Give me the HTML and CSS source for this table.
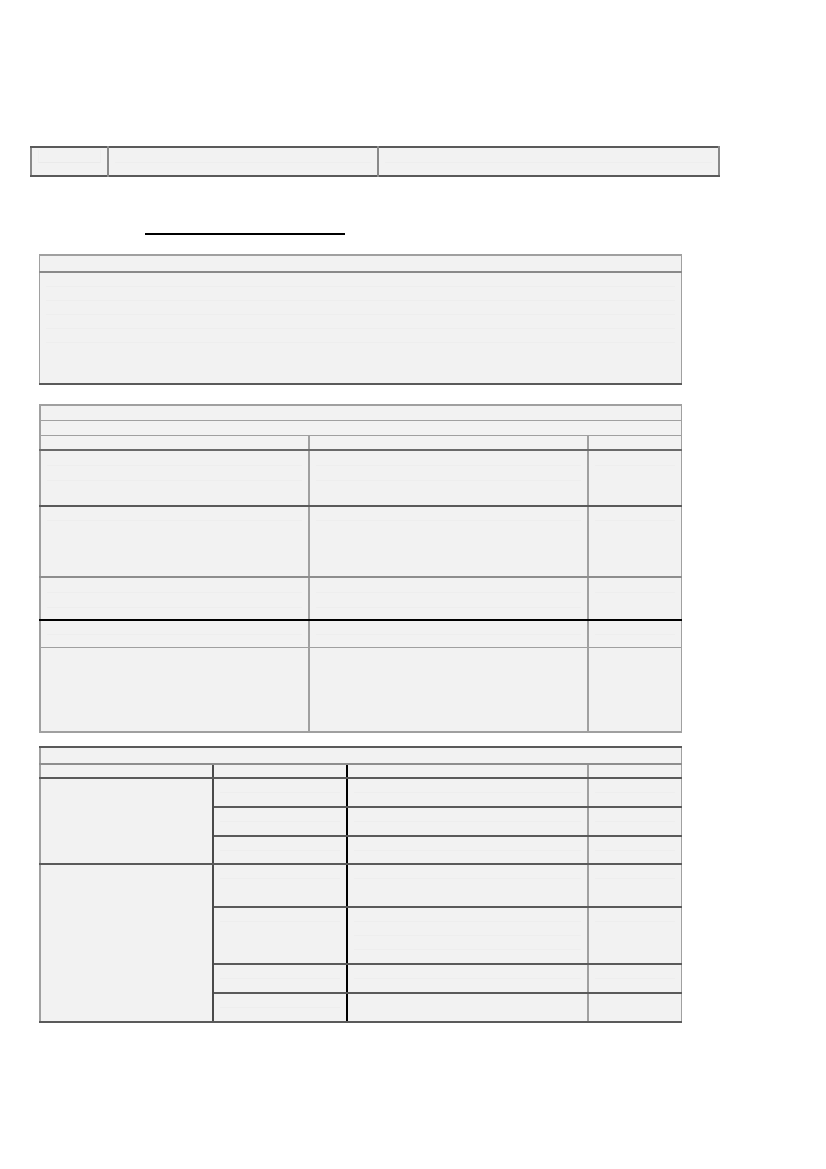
FILE: index.html
```html
<!DOCTYPE html>
<html>
<head>
<meta charset="utf-8">
<link rel="stylesheet" href="styles.css">
</head>
<body>
<div class="page">
  <table class="t top">
    <tr>
      <td class="c1"><div class="ln"></div></td>
      <td class="c2"><div class="ln"></div></td>
      <td class="c3"><div class="ln"></div></td>
    </tr>
  </table>

  <div class="heading"><span class="uline"></span></div>

  <table class="t box">
    <tr><td class="bh"></td></tr>
    <tr><td class="bb">
      <div class="ln"></div><div class="ln"></div><div class="ln"></div><div class="ln"></div><div class="ln"></div>
    </td></tr>
  </table>

  <table class="t t2">
    <colgroup><col class="w1"><col class="w2"><col class="w3"></colgroup>
    <tr class="h16"><td colspan="3"></td></tr>
    <tr class="h16"><td colspan="3"></td></tr>
    <tr class="h15 dk"><td class="lv"></td><td class="lv"></td><td></td></tr>
    <tr class="r56 dk"><td class="lv"><div class="ln"></div><div class="ln"></div></td><td class="lv"><div class="ln"></div><div class="ln"></div></td><td><div class="ln"></div></td></tr>
    <tr class="r71 gr"><td class="lv"><div class="ln"></div></td><td class="lv"><div class="ln"></div></td><td><div class="ln"></div></td></tr>
    <tr class="r43 bk"><td class="lv"><div class="ln"></div><div class="ln"></div></td><td class="lv"><div class="ln"></div><div class="ln"></div></td><td><div class="ln"></div></td></tr>
    <tr class="r28"><td class="lv"><div class="ln"></div></td><td class="lv"><div class="ln"></div></td><td><div class="ln"></div></td></tr>
    <tr class="r85"><td class="lv"></td><td class="lv"></td><td></td></tr>
  </table>

  <table class="t t3">
    <colgroup><col class="v1"><col class="v2"><col class="v3"><col class="v4"></colgroup>
    <tr class="h17 gr"><td colspan="4"></td></tr>
    <tr class="h14 dk"><td class="dv"></td><td class="bv"></td><td class="lv"></td><td></td></tr>
    <tr class="r29 dk"><td rowspan="3" class="dv"></td><td class="bv"><div class="ln"></div></td><td class="lv"><div class="ln"></div></td><td><div class="ln"></div></td></tr>
    <tr class="r29 dk"><td class="bv"><div class="ln"></div></td><td class="lv"><div class="ln"></div></td><td><div class="ln"></div></td></tr>
    <tr class="r28 dk"><td class="bv"><div class="ln"></div></td><td class="lv"><div class="ln"></div></td><td><div class="ln"></div></td></tr>
    <tr class="r43 dk"><td rowspan="4" class="dv"></td><td class="bv"><div class="ln"></div></td><td class="lv"><div class="ln"></div></td><td><div class="ln"></div></td></tr>
    <tr class="r57 dk"><td class="bv"><div class="ln"></div></td><td class="lv"><div class="ln"></div><div class="ln"></div><div class="ln"></div></td><td><div class="ln"></div></td></tr>
    <tr class="r29 dk"><td class="bv"><div class="ln"></div></td><td class="lv"><div class="ln"></div></td><td><div class="ln"></div></td></tr>
    <tr class="r28 dk"><td class="bv"><div class="ln"></div></td><td class="lv"></td><td></td></tr>
  </table>
</div>
</body>
</html>
```

FILE: styles.css
```css
html, body {
  margin: 0;
  padding: 0;
  background: #ffffff;
  font-family: "Liberation Sans", Arial, sans-serif;
}
.page {
  padding-top: 146px;
  padding-left: 30px;
}
.t {
  border-collapse: collapse;
  table-layout: fixed;
  background: #f2f2f2;
}
.t td {
  padding: 0;
  vertical-align: top;
  border: 1px solid #a0a0a0;
}
.ln {
  height: 13px;
  margin: 0 6px;
  border-bottom: 1px solid #eeeeee;
}

/* top table */
.top {
  width: 690px;
  border-top: 2px solid #5a5a5a;
  border-bottom: 2px solid #5a5a5a;
  border-left: 2px solid #8a8a8a;
  border-right: 2px solid #8a8a8a;
}
.top td { height: 27px; border-color: #8a8a8a; }
.top .c1 { width: 75px; border-right: 2px solid #8a8a8a; }
.top .c2 { width: 268px; border-right: 2px solid #8a8a8a; }
.top .c1 .ln { margin-top: 2px; height: 12px; margin-left: 6px; margin-right: 6px; border-bottom: 1px solid #eaeaea; border-left: 1px solid #eeeeee; border-right: 1px solid #eeeeee; }
.top .ln { margin-top: 2px; height: 12px; }

.heading {
  height: 2px;
  margin-top: 56px;
  margin-left: 115px;
}
.uline {
  display: block;
  width: 200px;
  height: 2px;
  background: #000;
}

/* box */
.box {
  width: 643px;
  margin-top: 19px;
  margin-left: 9px;
  border-top: 2px solid #a0a0a0;
  border-left: 1px solid #a0a0a0;
  border-right: 1px solid #5a5a5a;
  border-bottom: 2px solid #5a5a5a;
}
.box .bh { height: 15px; border-bottom: 2px solid #8a8a8a; }
.box .bb { height: 110px; }
.box .bb .ln { margin: 0 6px; height: 13px; }

/* table 2 */
.t2 {
  width: 641px;
  margin-top: 19px;
  margin-left: 9px;
  border-top: 2px solid #a0a0a0;
  border-left: 2px solid #a0a0a0;
  border-right: 1px solid #a0a0a0;
  border-bottom: 2px solid #a0a0a0;
}
.t2 .w1 { width: 269px; }
.t2 .w2 { width: 279px; }
.t2 .w3 { width: 93px; }
.t2 .lv { border-right: 2px solid #a0a0a0; }
.h16 td { height: 14px; }
.h15 td { height: 13px; }
.dk td { border-bottom: 2px solid #5a5a5a; }
.gr td { border-bottom: 2px solid #8e8e8e; }
.bk td { border-bottom: 2px solid #000000; }
.t2 .h15 td { border-bottom: 2px solid #6a6a6a; }
.t2 .r56 td { border-bottom: 2px solid #5a5a5a; }
.r56 td { height: 54px; }
.r71 td { height: 69px; }
.r43 td { height: 41px; }
.r28 td { height: 26px; }
.r29 td { height: 27px; }
.r57 td { height: 55px; }
.r85 td { height: 83px; }
.t2 .r56 .ln, .t2 .r43 .ln { height: 14px; }

/* table 3 */
.t3 {
  width: 641px;
  margin-top: 13px;
  margin-left: 9px;
  border-top: 2px solid #5a5a5a;
  border-left: 2px solid #a0a0a0;
  border-right: 1px solid #a0a0a0;
  border-bottom: 2px solid #a0a0a0;
}
.t3 .v1 { width: 173px; }
.t3 .v2 { width: 134px; }
.t3 .v3 { width: 241px; }
.t3 .v4 { width: 93px; }
.h17 td { height: 15px; }
.h14 td { height: 12px; }
.t3 .h17 td { border-bottom: 2px solid #8e8e8e; }
.t3 .dv { border-right: 2px solid #4a4a4a; }
.t3 .bv { border-right: 2px solid #000000; }
.t3 .lv { border-right: 2px solid #a0a0a0; }
.t3 td[rowspan] { border-bottom: 2px solid #5a5a5a; }
.t3 .r57 .lv .ln { height: 13px; }
.t3 .r28:last-child td { height: 27px; }
```
